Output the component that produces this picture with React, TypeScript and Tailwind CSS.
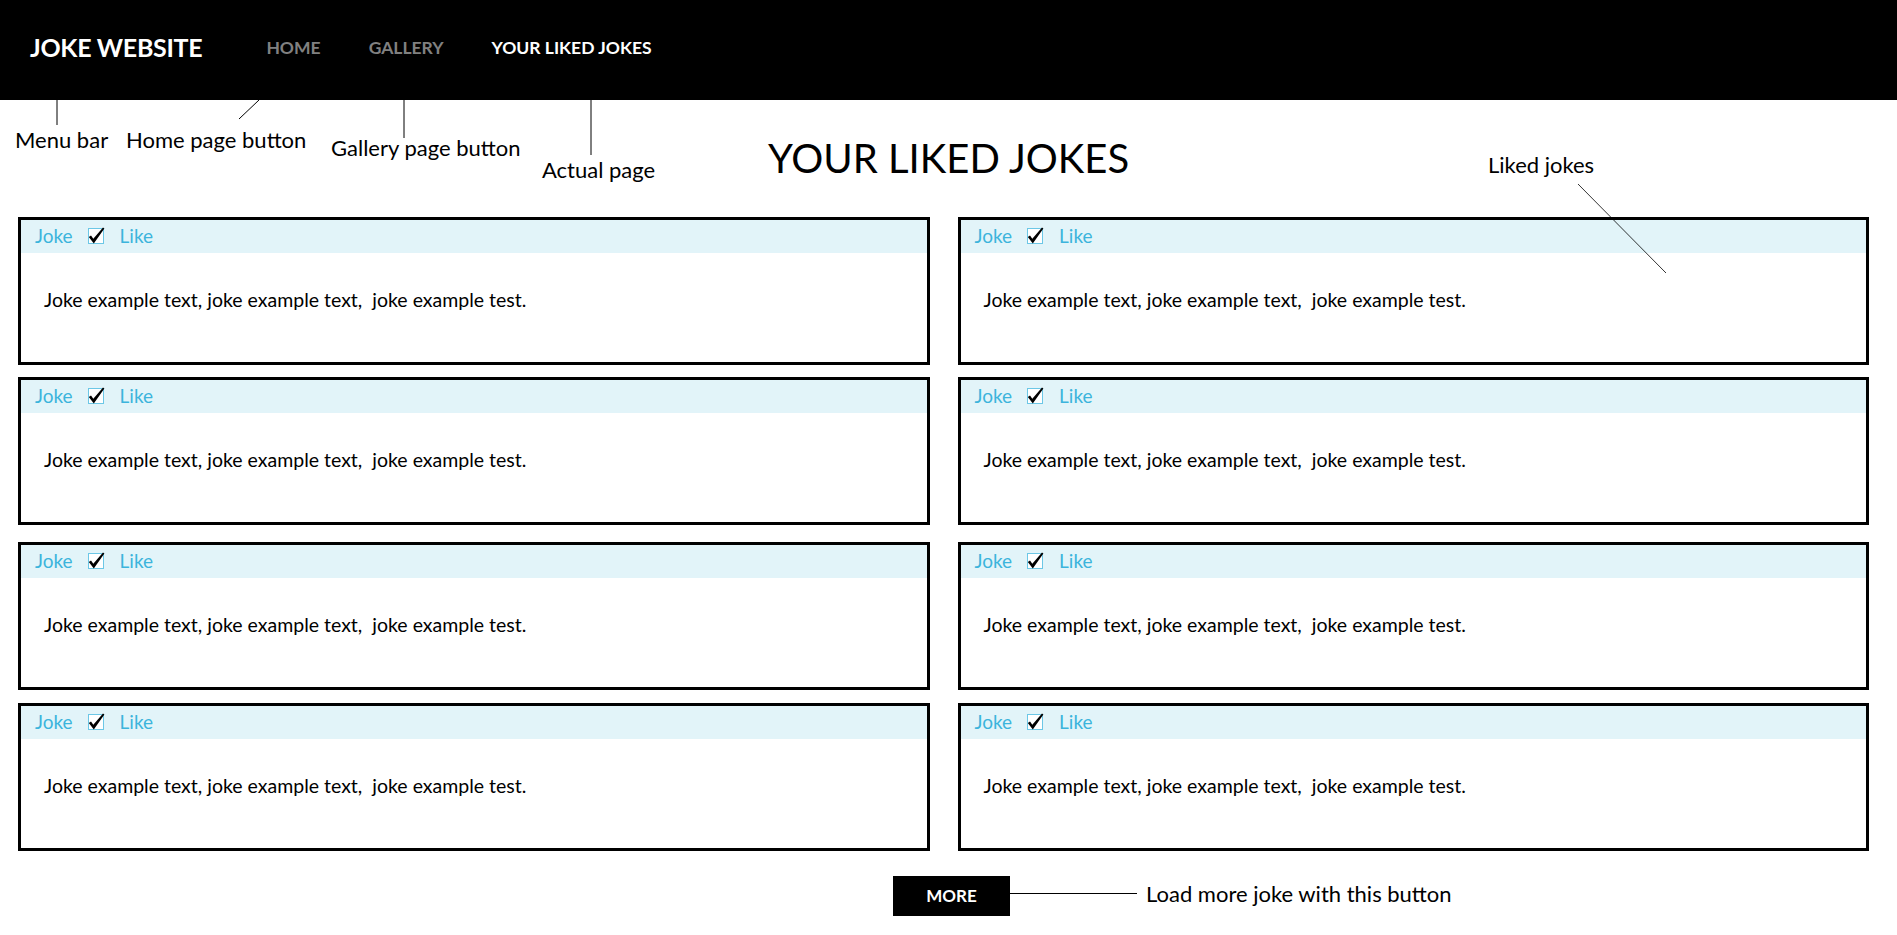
import React from "react";

const jokes = Array.from({ length: 8 }, (_, i) => ({
  id: i,
  text: "Joke example text, joke example text,  joke example test.",
}));

// vertical spacing between the card rows, as in the mockup
const rowGap = ["", "mt-[12px]", "mt-[17px]", "mt-[13px]"];

function CheckBox() {
  return (
    <svg width="17" height="17" viewBox="0 0 17 17" className="shrink-0">
      <rect x="0.5" y="1.5" width="15" height="15" fill="white" stroke="#6cc7e6" strokeWidth="1" />
      <path d="M0.8 10 L3 8.4 L5.3 11.8 L15 0.4 L16.4 1.6 L5.8 16.4 Z" fill="black" />
    </svg>
  );
}

function JokeCard({ text }: { text: string }) {
  return (
    <div className="h-[148px] border-[3px] border-black bg-white">
      <div className="flex h-[33px] items-center bg-[#e2f4f9] pl-[14px] text-[19px] text-[#3cb4dc]">
        <span>Joke</span>
        <span className="ml-[15px] pb-[2px]">
          <CheckBox />
        </span>
        <span className="ml-[15px]">Like</span>
      </div>
      <p className="whitespace-pre pl-[23px] pt-[35px] text-[19.5px] leading-[24px] text-black">{text}</p>
    </div>
  );
}

export default function App() {
  const rows = [0, 1, 2, 3];

  return (
    <div className="relative min-h-screen bg-white font-['Lato','Liberation_Sans',sans-serif] text-black">
      {/* Menu bar */}
      <nav className="flex h-[100px] items-center bg-black pb-[4px] pl-[30px]">
        <span className="text-[25px] font-bold tracking-[-0.3px] text-white">JOKE WEBSITE</span>
        <div className="ml-[64px] flex items-center gap-[48px] text-[17.5px] font-bold">
          <a className="text-[#808080]">HOME</a>
          <a className="text-[#808080]">GALLERY</a>
          <a className="text-white">YOUR LIKED JOKES</a>
        </div>
      </nav>

      {/* Page title */}
      <div className="h-[117px] pt-[37px]">
        <h1 className="text-center text-[40px] leading-[42px] font-normal">YOUR LIKED JOKES</h1>
      </div>

      {/* Liked jokes */}
      <div className="pl-[18px] pr-[28px]">
        {rows.map((r) => (
          <div key={r} className={`grid grid-cols-2 gap-x-[28px] ${rowGap[r]}`}>
            <JokeCard text={jokes[r * 2].text} />
            <JokeCard text={jokes[r * 2 + 1].text} />
          </div>
        ))}
      </div>

      {/* More button */}
      <div className="mt-[25px] flex justify-center pl-[6px]">
        <div className="relative">
          <button className="h-[40px] w-[117px] bg-black text-[17px] font-bold text-white">MORE</button>
          <div className="absolute left-full top-[17px] h-px w-[127px] bg-black" />
          <span className="absolute left-[253px] top-[5px] whitespace-nowrap text-[22px] leading-[26px]">
            Load more joke with this button
          </span>
        </div>
      </div>

      {/* Annotations */}
      <svg className="pointer-events-none absolute left-0 top-0" width="1897" height="300">
        <line x1="57" y1="100" x2="57" y2="125" stroke="black" strokeWidth="1" />
        <line x1="259" y1="100" x2="239" y2="119" stroke="black" strokeWidth="1" />
        <line x1="404" y1="100" x2="404" y2="138" stroke="black" strokeWidth="1" />
        <line x1="591" y1="100" x2="591" y2="155" stroke="black" strokeWidth="1" />
        <line x1="1578" y1="184" x2="1666" y2="273" stroke="black" strokeWidth="0.8" />
      </svg>
      <span className="absolute left-[15px] top-[127px] text-[22px] leading-[26px]">Menu bar</span>
      <span className="absolute left-[126px] top-[127px] text-[22px] leading-[26px]">Home page button</span>
      <span className="absolute left-[331px] top-[135px] text-[22px] leading-[26px]">Gallery page button</span>
      <span className="absolute left-[542px] top-[157px] text-[22px] leading-[26px]">Actual page</span>
      <span className="absolute left-[1488px] top-[152px] text-[22px] leading-[26px]">Liked jokes</span>
    </div>
  );
}
